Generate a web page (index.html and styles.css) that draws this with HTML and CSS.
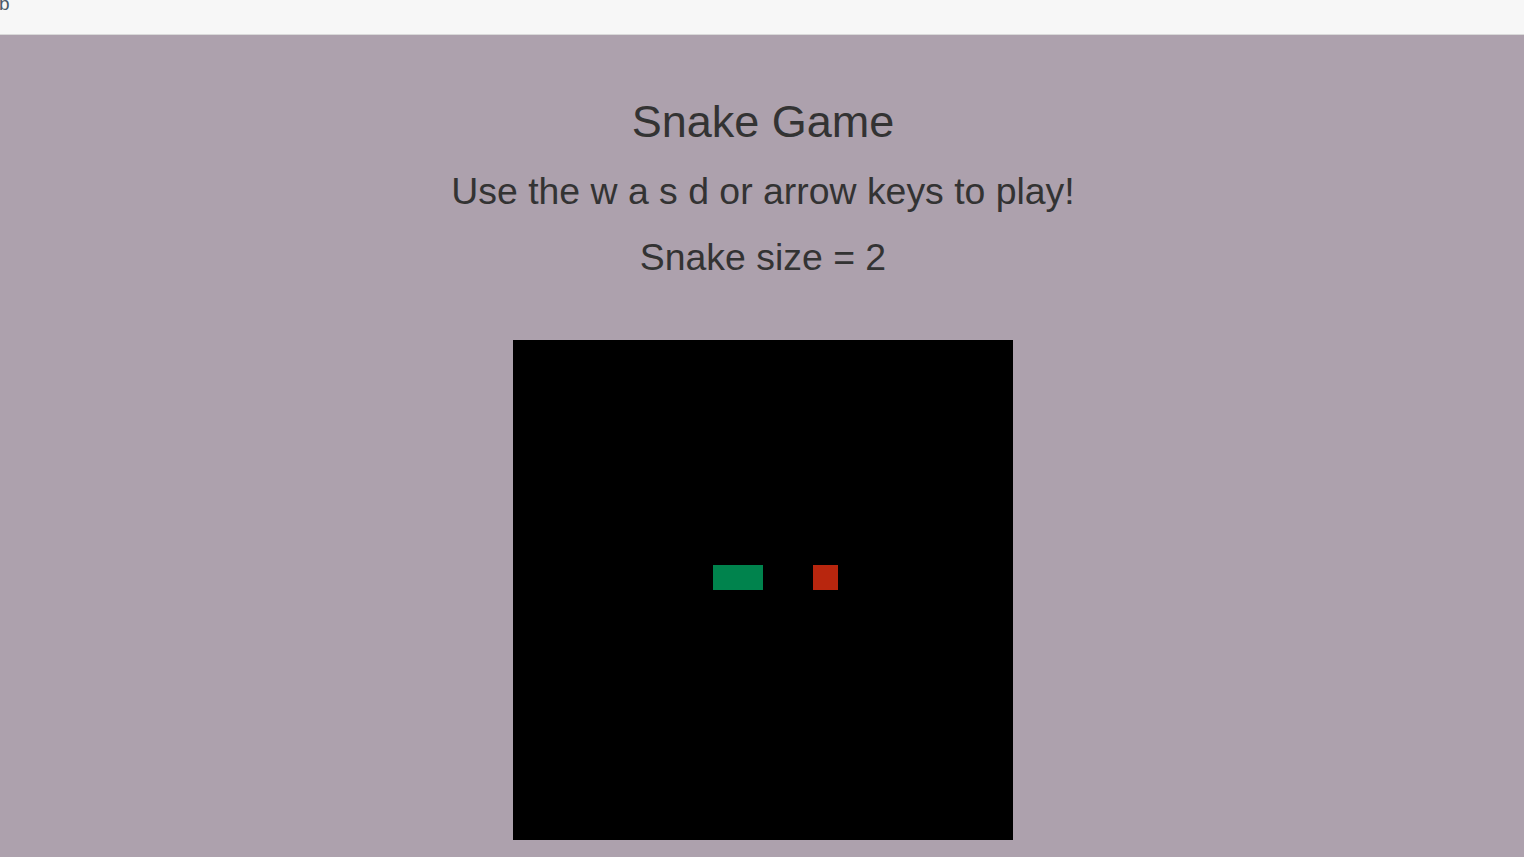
FILE: index.html
```html
<!DOCTYPE html>
<html>
<head>
<meta charset="utf-8">
<link rel="stylesheet" href="styles.css">
</head>
<body>
<div class="topbar"><span class="stray">b</span></div>
<main class="page">
  <h1 class="title">Snake Game</h1>
  <p class="line">Use the w a s d or arrow keys to play!</p>
  <p class="line score">Snake size = 2</p>
  <div class="board">
    <div class="snake"></div>
    <div class="food"></div>
  </div>
</main>
</body>
</html>
```
FILE: styles.css
```css
html, body {
  margin: 0;
  padding: 0;
  height: 100%;
  overflow: hidden;
}
body {
  font-family: "Liberation Sans", Arial, sans-serif;
  background: #ada1ad;
  color: #333333;
}
.topbar {
  height: 34px;
  background: #f7f7f7;
  border-bottom: 1px solid #d9d9d9;
  overflow: hidden;
}
.stray {
  display: block;
  font-size: 19px;
  line-height: 19px;
  margin-top: -6px;
  margin-left: -1px;
  color: #4a5a6a;
}
.page {
  display: flex;
  flex-direction: column;
  align-items: center;
  padding-top: 61px;
  padding-left: 2px;
  text-align: center;
}
.title {
  margin: 0;
  font-size: 45px;
  line-height: 51px;
  font-weight: normal;
}
.line {
  margin: 22px 0 0;
  font-size: 37.4px;
  line-height: 44px;
}
.board {
  margin-top: 61px;
  width: 500px;
  height: 500px;
  background: #000000;
  display: grid;
  grid-template-columns: repeat(20, 25px);
  grid-template-rows: repeat(20, 25px);
}
.snake {
  grid-column: 9 / span 2;
  grid-row: 10;
  background: #00834d;
}
.food {
  grid-column: 13;
  grid-row: 10;
  background: #b8260e;
}
```
